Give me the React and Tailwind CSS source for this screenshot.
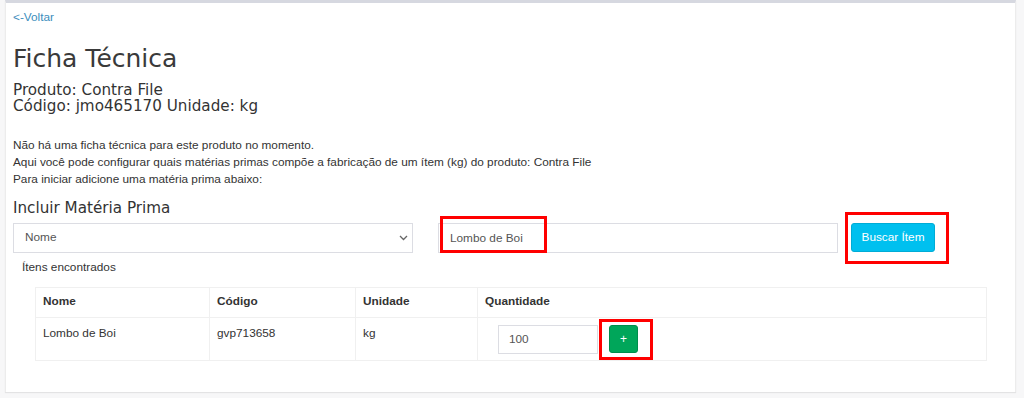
import React from 'react'

const rows = [
  { nome: 'Lombo de Boi', codigo: 'gvp713658', unidade: 'kg', quantidade: '100' },
]

export default function App() {
  return (
    <div className="h-[398px] bg-[#f7f7f8] text-[#333] font-['Liberation_Sans',Arial,sans-serif] text-[11.8px] overflow-hidden">
      <div className="relative ml-[5px] w-[1011px] h-[392px] bg-white border-t-[3px] border-[#d6d8e0] border-x border-x-[#ececec] shadow-[0_1px_1px_rgba(0,0,0,0.08)] px-[7px] pt-[6px]">
        {/* Voltar */}
        <a href="#" className="block leading-[17px] text-[#3c8dbc]">&lt;-Voltar</a>

        {/* Titulo */}
        <h1 className="mt-[19px] text-[25px] leading-[28px] font-['DejaVu_Sans',sans-serif] font-normal text-[#3a3a3a]">Ficha Técnica</h1>
        <div className="mt-[9px] text-[15.2px] leading-[16px] font-['DejaVu_Sans',sans-serif]">
          <div>Produto: Contra File</div>
          <div>Código: jmo465170 Unidade: kg</div>
        </div>

        <div className="mt-[23px] leading-[17.2px]">
          <p>Não há uma ficha técnica para este produto no momento.</p>
          <p>Aqui você pode configurar quais matérias primas compõe a fabricação de um ítem (kg) do produto: Contra File</p>
          <p>Para iniciar adicione uma matéria prima abaixo:</p>
        </div>

        <h3 className="mt-[11px] text-[15.2px] leading-[16px] font-['DejaVu_Sans',sans-serif]">Incluir Matéria Prima</h3>

        {/* Form */}
        <div className="mt-[7px] flex items-center">
          <div className="relative w-[400px] h-[30px]">
            <select className="appearance-none w-full h-full border border-[#dcdde3] bg-white pl-[11px] text-[11.8px] text-[#555] outline-none">
              <option>Nome</option>
            </select>
            <svg className="absolute right-[5px] top-[12px]" width="9" height="6" viewBox="0 0 9 6" fill="none">
              <polyline points="1,1 4.5,4.5 8,1" stroke="#666" strokeWidth="1.3" />
            </svg>
          </div>
          <input
            defaultValue="Lombo de Boi"
            className="ml-[25px] w-[400px] h-[30px] border border-[#dcdde3] px-[11px] text-[11.8px] text-[#555] outline-none"
          />
          <button className="ml-[13px] w-[84px] h-[29px] rounded-[3px] bg-[#00c0ef] border border-[#00acd6] text-white text-[11.8px]">Buscar Ítem</button>
        </div>

        <div className="mt-[6px] ml-[9px] leading-[17px]">Ítens encontrados</div>

        {/* Tabela */}
        <table className="mt-[11px] ml-[22px] w-[952px] border-collapse border border-[#f0f0f0] table-fixed">
          <colgroup>
            <col className="w-[174px]" />
            <col className="w-[146px]" />
            <col className="w-[122px]" />
            <col />
          </colgroup>
          <thead>
            <tr className="h-[30px]">
              {['Nome', 'Código', 'Unidade', 'Quantidade'].map((h) => (
                <th key={h} className="border border-[#f0f0f0] px-[7px] pt-[5px] pb-[7px] text-left font-bold leading-[17px] align-top">{h}</th>
              ))}
            </tr>
          </thead>
          <tbody>
            {rows.map((r) => (
              <tr key={r.codigo} className="h-[43px]">
                <td className="border border-[#f0f0f0] px-[7px] pt-[7px] align-top leading-[17px]">{r.nome}</td>
                <td className="border border-[#f0f0f0] px-[7px] pt-[7px] align-top leading-[17px]">{r.codigo}</td>
                <td className="border border-[#f0f0f0] px-[7px] pt-[7px] align-top leading-[17px]">{r.unidade}</td>
                <td className="border border-[#f0f0f0] pl-[20px] pt-[7px] pb-[6px] align-top">
                  <div className="flex items-center">
                    <input
                      defaultValue={r.quantidade}
                      className="w-[100px] h-[29px] border border-[#dcdde3] px-[10px] text-[11.8px] text-[#555] outline-none"
                    />
                    <button className="ml-[11px] w-[29px] h-[28px] rounded-[3px] bg-[#00a65a] border border-[#008d4c] text-white text-[12px] leading-none">+</button>
                  </div>
                </td>
              </tr>
            ))}
          </tbody>
        </table>

        {/* marcações */}
        <div className="absolute left-[434px] top-[213px] w-[107px] h-[37px] border-[3px] border-[#ff0000] pointer-events-none" />
        <div className="absolute left-[839px] top-[209px] w-[104px] h-[52px] border-[3px] border-[#ff0000] pointer-events-none" />
        <div className="absolute left-[593px] top-[316px] w-[54px] h-[41px] border-[3px] border-[#ff0000] pointer-events-none" />
      </div>
    </div>
  )
}
